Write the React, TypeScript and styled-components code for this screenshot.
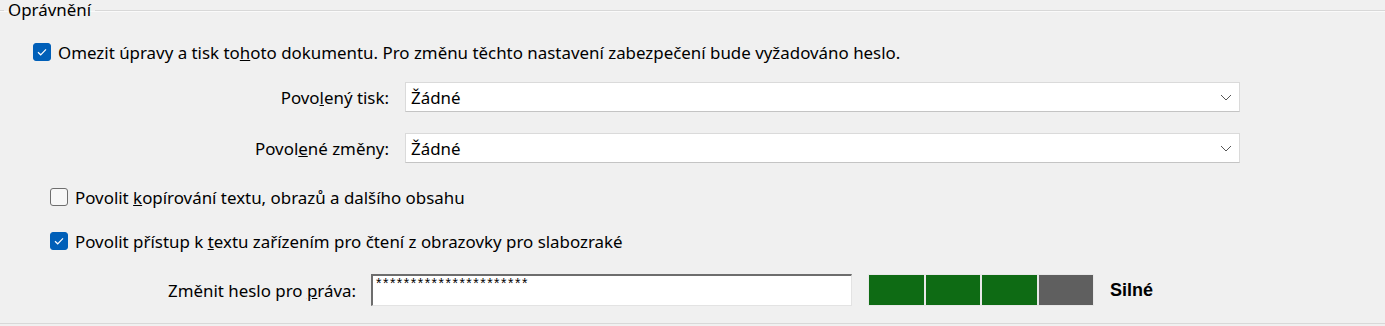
import styled, { createGlobalStyle } from "styled-components";

const GlobalStyle = createGlobalStyle`
  html, body {
    margin: 0;
    padding: 0;
    background: #f0f0f0;
  }
  body {
    font-family: "Noto Sans", "Open Sans", sans-serif;
    font-size: 16.9px;
    color: #000;
  }
`;

const Group = styled.fieldset`
  margin: 0;
  padding: 0 0 17px 0;
  border: none;
  border-top: 1px solid #d8d8d8;
  border-bottom: 1px solid #d8d8d8;
  box-shadow: inset 0 1px 0 #fafafa;
  min-width: 0;
`;

const Legend = styled.legend`
  margin-left: 4px;
  padding: 0 4px;
  line-height: 20px;
`;

const CheckRow = styled.label<{ $indent: number; $top: number }>`
  display: flex;
  align-items: center;
  gap: 7px;
  height: 24px;
  margin-top: ${(p) => p.$top}px;
  padding-left: ${(p) => p.$indent}px;
`;

const Box = styled.span<{ $checked: boolean }>`
  box-sizing: border-box;
  flex-shrink: 0;
  width: 18px;
  height: 18px;
  border-radius: 3px;
  display: inline-flex;
  align-items: center;
  justify-content: center;
  background: ${(p) => (p.$checked ? "#005fb8" : "#f7f7f7")};
  border: 1px solid ${(p) => (p.$checked ? "#005fb8" : "#6e6e6e")};
`;

const FieldRow = styled.div<{ $top: number }>`
  display: flex;
  align-items: center;
  margin-top: ${(p) => p.$top}px;
  margin-right: 145px;
`;

const FieldLabel = styled.span<{ $width: number }>`
  width: ${(p) => p.$width}px;
  text-align: right;
  flex-shrink: 0;
`;

const Select = styled.div`
  box-sizing: border-box;
  flex: 1;
  height: 30px;
  margin-left: 16px;
  background: #fff;
  border: 1px solid #dadada;
  border-bottom-color: #c4c4c4;
  display: flex;
  align-items: center;
  justify-content: space-between;
  padding: 0 7px 0 5px;
`;

const PasswordRow = styled.div`
  display: flex;
  align-items: center;
  margin-top: 21px;
`;

const PasswordInput = styled.div`
  box-sizing: border-box;
  width: 481px;
  height: 32px;
  margin-left: 15px;
  background: #fff;
  border: 1px solid #e3e3e3;
  border-top: 2px solid #6d6d6d;
  border-left: 2px solid #6d6d6d;
  padding: 0 3px;
  font-size: 14px;
  line-height: 15px;
  letter-spacing: 1.5px;
  font-family: "Liberation Sans", Arial, sans-serif;
`;

const Meter = styled.div`
  display: flex;
  gap: 2px;
  margin-left: 16px;
  background: #e8e8e8;
  padding: 1px;
`;

const Segment = styled.span<{ $on: boolean }>`
  width: 54.5px;
  height: 30px;
  background: ${(p) => (p.$on ? "#0e6b14" : "#5f5f5f")};
`;

const Strength = styled.span`
  margin-left: 16px;
  font-weight: bold;
  font-family: "Liberation Sans", Arial, sans-serif;
  font-size: 18px;
`;

const Check = () => (
  <svg width="12" height="10" viewBox="0 0 12 10">
    <path d="M2 5.2 L4.7 7.8 L10 2.4" fill="none" stroke="#fff" strokeWidth="1.2" />
  </svg>
);

const Chevron = () => (
  <svg width="12" height="7" viewBox="0 0 12 7">
    <path d="M1 1 L6 6 L11 1" fill="none" stroke="#555" strokeWidth="1" />
  </svg>
);

const Checkbox = ({
  checked,
  indent,
  top,
  children,
}: {
  checked: boolean;
  indent: number;
  top: number;
  children: React.ReactNode;
}) => (
  <CheckRow $indent={indent} $top={top}>
    <Box $checked={checked}>{checked && <Check />}</Box>
    <span>{children}</span>
  </CheckRow>
);

export default function App() {
  return (
    <>
      <GlobalStyle />
      <Group>
        <Legend>Oprávnění</Legend>
        <Checkbox checked indent={33} top={20}>
          Omezit úpravy a tisk to<u>h</u>oto dokumentu. Pro změnu těchto nastavení
          zabezpečení bude vyžadováno heslo.
        </Checkbox>
        <FieldRow $top={18}>
          <FieldLabel $width={389}>
            Povo<u>l</u>ený tisk:
          </FieldLabel>
          <Select>
            <span>Žádné</span>
            <Chevron />
          </Select>
        </FieldRow>
        <FieldRow $top={21}>
          <FieldLabel $width={389}>
            Povol<u>e</u>né změny:
          </FieldLabel>
          <Select>
            <span>Žádné</span>
            <Chevron />
          </Select>
        </FieldRow>
        <Checkbox checked={false} indent={50} top={22}>
          Povolit <u>k</u>opírování textu, obrazů a dalšího obsahu
        </Checkbox>
        <Checkbox checked indent={50} top={20}>
          Povolit přístup k <u>t</u>extu zařízením pro čtení z obrazovky pro slabozraké
        </Checkbox>
        <PasswordRow>
          <FieldLabel $width={356}>
            Změnit heslo pro <u>p</u>ráva:
          </FieldLabel>
          <PasswordInput>**********************</PasswordInput>
          <Meter>
            <Segment $on />
            <Segment $on />
            <Segment $on />
            <Segment $on={false} />
          </Meter>
          <Strength>Silné</Strength>
        </PasswordRow>
      </Group>
    </>
  );
}
